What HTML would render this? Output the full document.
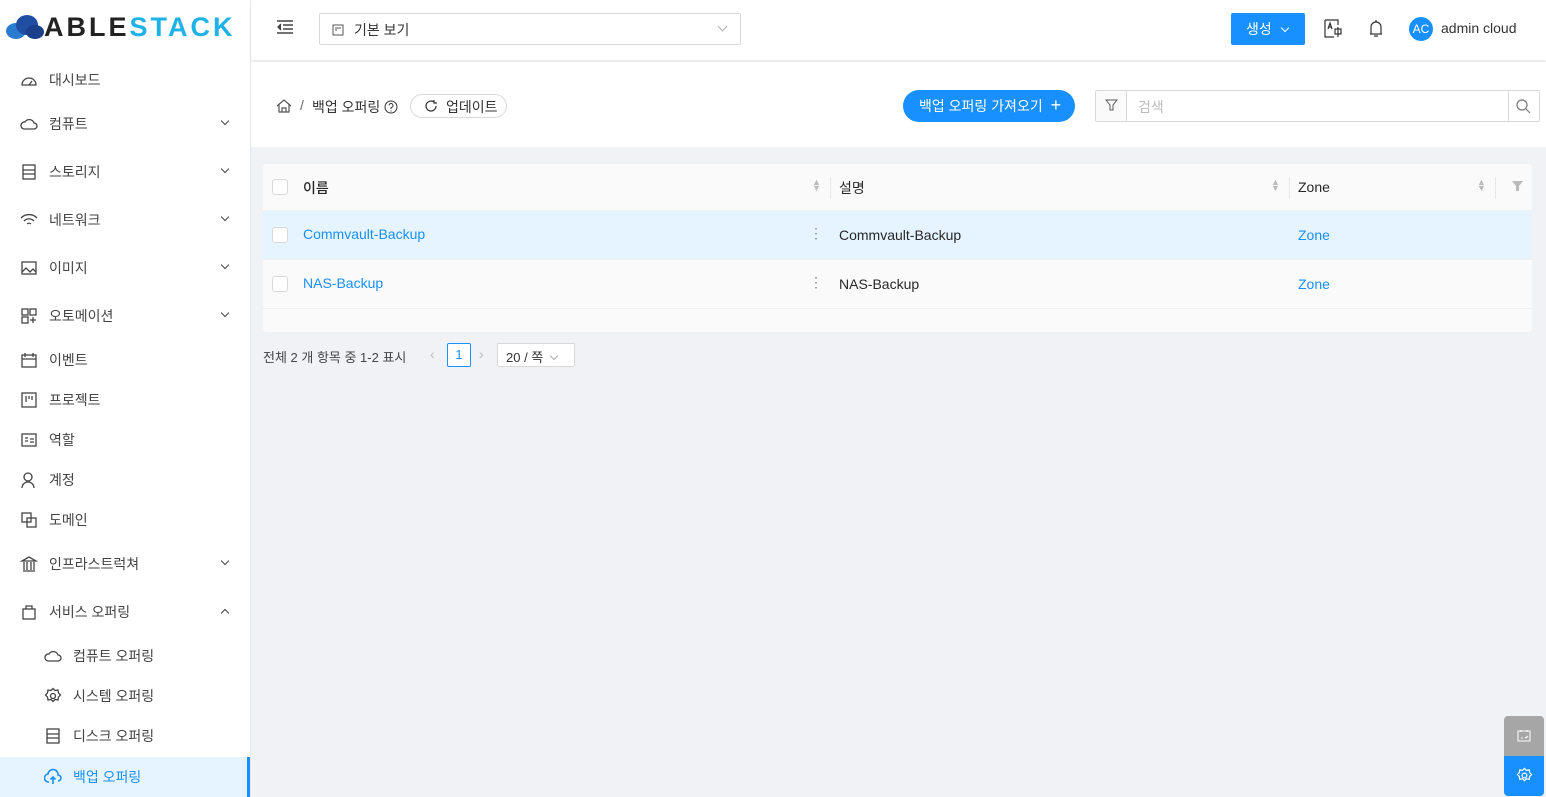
<!DOCTYPE html>
<html><head><meta charset="utf-8"><style>
*{box-sizing:border-box;margin:0;padding:0}
body{width:1546px;height:797px;overflow:hidden;background:#f0f2f5;font-family:"Liberation Sans","Noto Sans CJK KR",sans-serif;font-size:14px;color:rgba(0,0,0,.85);position:relative}
.side{position:absolute;left:0;top:0;width:251px;height:797px;background:#fff;border-right:1px solid #e8e8e8}
.logo{position:absolute;left:6px;top:12px;height:30px;display:flex;align-items:center}
.logo span{font-size:27px;font-weight:bold;letter-spacing:3px}
.mi{position:absolute;left:0;width:250px;height:40px;display:flex;align-items:center;color:#444;font-size:14px}
.mi svg{position:absolute;left:20px}
.mi .t{position:absolute;left:49px}
.mi.sub svg{left:44px}.mi.sub .t{left:73px}
.mi .ar{position:absolute;left:222px;border-right:1.6px solid #444;border-bottom:1.6px solid #444;transform:rotate(45deg);top:14px;width:6px;height:6px}
.mi .ar.up{transform:rotate(-135deg);top:18px}
.sel{background:#e6f4ff;color:#1890ff;border-right:3px solid #1890ff}
.hdr{position:absolute;left:251px;top:0;right:0;height:60px;background:#fff;box-shadow:0 1px 3px rgba(0,21,41,.05)}
.bc{position:absolute;left:251px;top:62px;right:0;height:85px;background:#fff}
.tbl{position:absolute;left:263px;top:164px;width:1269px;height:168px;background:#fafafa;border-radius:4px;overflow:hidden}
.row{position:absolute;left:0;width:1269px;border-bottom:1px solid #f0f0f0}
.cb{position:absolute;left:9px;width:16px;height:16px;border:1px solid #d9d9d9;border-radius:3px;background:#fff}
.a{color:#1890ff}
</style></head><body>
<div class="side">
 <div class="logo">
  <svg width="38" height="26" viewBox="0 0 38 26"><ellipse cx="10" cy="17" rx="10" ry="8" fill="#2b7bd0"/><ellipse cx="21" cy="11" rx="11" ry="10" fill="#1f4ea3"/><ellipse cx="29" cy="18" rx="9" ry="7" fill="#1b3f8a"/></svg>
  <span style="color:#222">ABLE</span><span style="color:#1fb2e6">STACK</span>
 </div>
 <div class="mi" style="top:60px"><svg width="18" height="18" viewBox="0 0 18 18" fill="none" stroke="#444" stroke-width="1.3"><path d="M2 14a7 7 0 1 1 14 0z"/><path d="M9 14l3-4"/></svg><span class="t">대시보드</span></div>
 <div class="mi" style="top:104px"><svg width="18" height="18" viewBox="0 0 18 18" fill="none" stroke="#444" stroke-width="1.3"><path d="M4 14h10a3 3 0 0 0 0-6 5 5 0 0 0-9-1 3.5 3.5 0 0 0-1 7z"/></svg><span class="t">컴퓨트</span><i class="ar"></i></div>
 <div class="mi" style="top:152px"><svg width="18" height="18" viewBox="0 0 18 18" fill="none" stroke="#444" stroke-width="1.3"><rect x="3" y="2" width="12" height="14"/><path d="M3 7h12M3 11h12"/></svg><span class="t">스토리지</span><i class="ar"></i></div>
 <div class="mi" style="top:200px"><svg width="18" height="18" viewBox="0 0 18 18" fill="none" stroke="#444" stroke-width="1.3"><path d="M1 7a11 11 0 0 1 16 0M4 10a7 7 0 0 1 10 0M7 13a3 3 0 0 1 4 0"/></svg><span class="t">네트워크</span><i class="ar"></i></div>
 <div class="mi" style="top:248px"><svg width="18" height="18" viewBox="0 0 18 18" fill="none" stroke="#444" stroke-width="1.3"><rect x="2" y="3" width="14" height="12"/><path d="M2 13l4-4 4 4 3-3 3 3"/></svg><span class="t">이미지</span><i class="ar"></i></div>
 <div class="mi" style="top:296px"><svg width="18" height="18" viewBox="0 0 18 18" fill="none" stroke="#444" stroke-width="1.3"><rect x="2" y="2" width="6" height="6"/><rect x="10" y="2" width="6" height="6"/><rect x="2" y="10" width="6" height="6"/><path d="M10 13h6M13 10v6"/></svg><span class="t">오토메이션</span><i class="ar"></i></div>
 <div class="mi" style="top:340px"><svg width="18" height="18" viewBox="0 0 18 18" fill="none" stroke="#444" stroke-width="1.3"><rect x="2" y="4" width="14" height="12"/><path d="M5 2v4M13 2v4M2 8h14"/></svg><span class="t">이벤트</span></div>
 <div class="mi" style="top:380px"><svg width="18" height="18" viewBox="0 0 18 18" fill="none" stroke="#444" stroke-width="1.3"><rect x="2" y="2" width="14" height="14"/><path d="M6 5v6M9 5v3M12 5v4"/></svg><span class="t">프로젝트</span></div>
 <div class="mi" style="top:420px"><svg width="18" height="18" viewBox="0 0 18 18" fill="none" stroke="#444" stroke-width="1.3"><rect x="2" y="3" width="14" height="12"/><path d="M5 7h3M5 10h3M10 8h4M10 11h4"/></svg><span class="t">역할</span></div>
 <div class="mi" style="top:460px"><svg width="18" height="18" viewBox="0 0 18 18" fill="none" stroke="#444" stroke-width="1.3"><circle cx="8" cy="6" r="4"/><path d="M2 17a6 6 0 0 1 12 0"/></svg><span class="t">계정</span></div>
 <div class="mi" style="top:500px"><svg width="18" height="18" viewBox="0 0 18 18" fill="none" stroke="#444" stroke-width="1.3"><rect x="2" y="2" width="9" height="9"/><rect x="7" y="7" width="9" height="9"/></svg><span class="t">도메인</span></div>
 <div class="mi" style="top:544px"><svg width="18" height="18" viewBox="0 0 18 18" fill="none" stroke="#444" stroke-width="1.3"><path d="M2 6l7-4 7 4zM3 16h12M4 7v8M7 7v8M11 7v8M14 7v8"/></svg><span class="t">인프라스트럭쳐</span><i class="ar"></i></div>
 <div class="mi" style="top:592px"><svg width="18" height="18" viewBox="0 0 18 18" fill="none" stroke="#444" stroke-width="1.3"><rect x="3" y="6" width="12" height="10"/><path d="M6 6V3h6v3"/></svg><span class="t">서비스 오퍼링</span><i class="ar up"></i></div>
 <div class="mi sub" style="top:636px"><svg width="18" height="18" viewBox="0 0 18 18" fill="none" stroke="#444" stroke-width="1.3"><path d="M4 14h10a3 3 0 0 0 0-6 5 5 0 0 0-9-1 3.5 3.5 0 0 0-1 7z"/></svg><span class="t">컴퓨트 오퍼링</span></div>
 <div class="mi sub" style="top:676px"><svg width="18" height="18" viewBox="0 0 18 18" fill="none" stroke="#444" stroke-width="1.3"><circle cx="9" cy="9" r="2.5"/><path d="M9 1.5l2 2 3-.5.5 3 2 2-2 2-.5 3-3-.5-2 2-2-2-3 .5-.5-3-2-2 2-2 .5-3 3 .5z"/></svg><span class="t">시스템 오퍼링</span></div>
 <div class="mi sub" style="top:716px"><svg width="18" height="18" viewBox="0 0 18 18" fill="none" stroke="#444" stroke-width="1.3"><rect x="3" y="2" width="12" height="14"/><path d="M3 7h12M3 11h12"/></svg><span class="t">디스크 오퍼링</span></div>
 <div class="mi sub sel" style="top:757px"><svg width="18" height="18" viewBox="0 0 18 18" fill="none" stroke="#1890ff" stroke-width="1.6"><path d="M5 14a4 4 0 0 1-1-8 5 5 0 0 1 10 1 3 3 0 0 1 0 6M9 16V9M6.5 11.5L9 9l2.5 2.5"/></svg><span class="t">백업 오퍼링</span></div>
</div>
<div class="hdr">
 <svg style="position:absolute;left:25px;top:19px" width="18" height="16" viewBox="0 0 18 16" fill="none" stroke="#444" stroke-width="1.4"><path d="M1 2h16M7 6h10M7 10h10M1 14h16"/><path d="M5 5L2 8l3 3" fill="#444"/></svg>
 <div style="position:absolute;left:68px;top:13px;width:422px;height:32px;border:1px solid #d9d9d9;border-radius:2px">
  <svg style="position:absolute;left:12px;top:10px" width="12" height="12" viewBox="0 0 12 12" fill="none" stroke="#555"><rect x="1" y="1" width="10" height="10"/><path d="M4 3v4M6 3v2M8 3v2"/></svg>
  <span style="position:absolute;left:34px;top:6px;color:#333">기본 보기</span>
  <i style="position:absolute;right:14px;top:9px;width:7px;height:7px;border-right:1px solid #aaa;border-bottom:1px solid #aaa;transform:rotate(45deg)"></i>
 </div>
 <div style="position:absolute;left:980px;top:13px;width:74px;height:32px;background:#1890ff;border-radius:2px;color:#fff;padding:6px 0 0 15px">생성 <span style="display:inline-block;width:6px;height:6px;border-right:1px solid #fff;border-bottom:1px solid #fff;transform:rotate(45deg);margin:0 0 3px 6px"></span></div>
 <svg style="position:absolute;left:1073px;top:19px" width="20" height="20" viewBox="0 0 20 20" fill="none" stroke="#333" stroke-width="1.2"><path d="M1 1h13v5M1 1v17h9"/><path d="M4 10l2-6 2 6M5 8h2"/><rect x="11" y="10" width="6" height="5"/><path d="M14 8v10"/></svg>
 <svg style="position:absolute;left:1117px;top:19px" width="16" height="20" viewBox="0 0 16 20" fill="none" stroke="#333" stroke-width="1.2"><path d="M3 15V8a5 5 0 0 1 10 0v7H2h12M6 17h4M8 1v2"/></svg>
 <div style="position:absolute;left:1158px;top:17px;width:24px;height:24px;border-radius:50%;background:#1890ff;color:#fff;font-size:12px;text-align:center;line-height:24px">AC</div>
 <span style="position:absolute;left:1190px;top:20px;color:#333">admin cloud</span>
</div>
<div class="bc">
 <svg style="position:absolute;left:25px;top:36px" width="16" height="16" viewBox="0 0 16 16" fill="none" stroke="#555" stroke-width="1.2"><path d="M1 8l7-6 7 6M3 6v8h10V6M6 14v-4h4v4"/></svg>
 <span style="position:absolute;left:49px;top:35px;color:#666">/</span>
 <span style="position:absolute;left:61px;top:35px;color:#333">백업 오퍼링</span>
 <svg style="position:absolute;left:133px;top:38px" width="14" height="14" viewBox="0 0 14 14" fill="none" stroke="#333"><circle cx="7" cy="7" r="6"/><path d="M5 5.5a2 2 0 1 1 2 2v1.5M7 10.5v1"/></svg>
 <div style="position:absolute;left:159px;top:32px;width:97px;height:24px;border:1px solid #d9d9d9;border-radius:12px">
  <svg style="position:absolute;left:13px;top:4px" width="14" height="14" viewBox="0 0 14 14" fill="none" stroke="#333" stroke-width="1.2"><path d="M12 7a5 5 0 1 1-2-4M10 1v3h3"/></svg>
  <span style="position:absolute;left:35px;top:2px;color:#333">업데이트</span>
 </div>
 <div style="position:absolute;left:652px;top:28px;width:172px;height:32px;background:#1890ff;border-radius:16px;color:#fff;padding:6px 0 0 16px">백업 오퍼링 가져오기 <span style="font-size:18px;line-height:14px;margin-left:4px">+</span></div>
 <div style="position:absolute;left:844px;top:28px;width:445px;height:32px;border:1px solid #d9d9d9;border-radius:2px;background:#fff">
  <div style="position:absolute;left:0;top:0;width:31px;height:30px;background:#fafafa;border-right:1px solid #d9d9d9"></div>
  <svg style="position:absolute;left:9px;top:8px" width="13" height="13" viewBox="0 0 13 13" fill="none" stroke="#555"><path d="M1 1h11L8 6v5H5V6z"/></svg>
  <span style="position:absolute;left:42px;top:6px;color:#bbb">검색</span>
  <div style="position:absolute;right:0;top:0;width:31px;height:30px;border-left:1px solid #d9d9d9"></div>
  <svg style="position:absolute;right:8px;top:8px" width="15" height="15" viewBox="0 0 15 15" fill="none" stroke="#777" stroke-width="1.2"><circle cx="6" cy="6" r="5"/><path d="M10 10l4 4"/></svg>
 </div>
</div>
<div class="tbl">
 <div class="row" style="top:0;height:47px;background:#fafafa">
  <div class="cb" style="top:15px"></div>
  <span style="position:absolute;left:40px;top:14px;font-weight:500">이름</span>
  <span style="position:absolute;left:549px;top:15px;font-size:9px;color:#bbb;line-height:6px">▲<br>▼</span>
  <div style="position:absolute;left:567px;top:13px;width:1px;height:22px;background:#e8e8e8"></div>
  <span style="position:absolute;left:576px;top:14px">설명</span>
  <span style="position:absolute;left:1008px;top:15px;font-size:9px;color:#bbb;line-height:6px">▲<br>▼</span>
  <div style="position:absolute;left:1026px;top:13px;width:1px;height:22px;background:#e8e8e8"></div>
  <span style="position:absolute;left:1035px;top:15px">Zone</span>
  <span style="position:absolute;left:1214px;top:15px;font-size:9px;color:#bbb;line-height:6px">▲<br>▼</span>
  <div style="position:absolute;left:1232px;top:13px;width:1px;height:22px;background:#e8e8e8"></div>
  <svg style="position:absolute;left:1249px;top:17px" width="11" height="11" viewBox="0 0 11 11"><path d="M0 0h11L7 5v5H4V5z" fill="#bbb"/></svg>
 </div>
 <div class="row" style="top:47px;height:49px;background:#e6f4ff">
  <div class="cb" style="top:16px"></div>
  <span class="a" style="position:absolute;left:40px;top:15px">Commvault-Backup</span>
  <span style="position:absolute;left:546px;top:14px;color:#888">⋮</span>
  <span style="position:absolute;left:576px;top:16px">Commvault-Backup</span>
  <span class="a" style="position:absolute;left:1035px;top:16px">Zone</span>
 </div>
 <div class="row" style="top:96px;height:49px">
  <div class="cb" style="top:16px"></div>
  <span class="a" style="position:absolute;left:40px;top:15px">NAS-Backup</span>
  <span style="position:absolute;left:546px;top:14px;color:#888">⋮</span>
  <span style="position:absolute;left:576px;top:16px">NAS-Backup</span>
  <span class="a" style="position:absolute;left:1035px;top:16px">Zone</span>
 </div>
</div>
<span style="position:absolute;left:263px;top:347px;font-size:13px;color:#444">전체 2 개 항목 중 1-2 표시</span>
<span style="position:absolute;left:430px;top:346px;color:#bbb">‹</span>
<div style="position:absolute;left:447px;top:343px;width:24px;height:24px;border:1px solid #1890ff;border-radius:2px;color:#1890ff;text-align:center;line-height:22px;font-size:13px;background:#fff">1</div>
<span style="position:absolute;left:479px;top:346px;color:#bbb">›</span>
<div style="position:absolute;left:497px;top:343px;width:78px;height:24px;border:1px solid #d9d9d9;border-radius:2px;background:#fff;font-size:13px;padding:3px 0 0 8px;color:#333">20 / 쪽 <span style="display:inline-block;width:6px;height:6px;border-right:1px solid #aaa;border-bottom:1px solid #aaa;transform:rotate(45deg);margin:0 0 3px 4px"></span></div>
<div style="position:absolute;left:1504px;top:716px;width:40px;height:40px;background:#a6a6a6;border-radius:4px 4px 0 0"><svg style="position:absolute;left:13px;top:13px" width="14" height="13" viewBox="0 0 14 13" fill="none" stroke="#fff"><rect x="1" y="2" width="12" height="10"/><path d="M4 1v2M10 1v2M4 9h2M8 8l1 1 2-2"/></svg></div>
<div style="position:absolute;left:1504px;top:756px;width:40px;height:40px;background:#1890ff;border-radius:0 0 4px 4px"><svg style="position:absolute;left:12px;top:11px" width="17" height="17" viewBox="0 0 18 18" fill="none" stroke="#fff" stroke-width="1.3"><circle cx="9" cy="9" r="2.5"/><path d="M9 1.5l2 2 3-.5.5 3 2 2-2 2-.5 3-3-.5-2 2-2-2-3 .5-.5-3-2-2 2-2 .5-3 3 .5z"/></svg></div>
</body></html>
